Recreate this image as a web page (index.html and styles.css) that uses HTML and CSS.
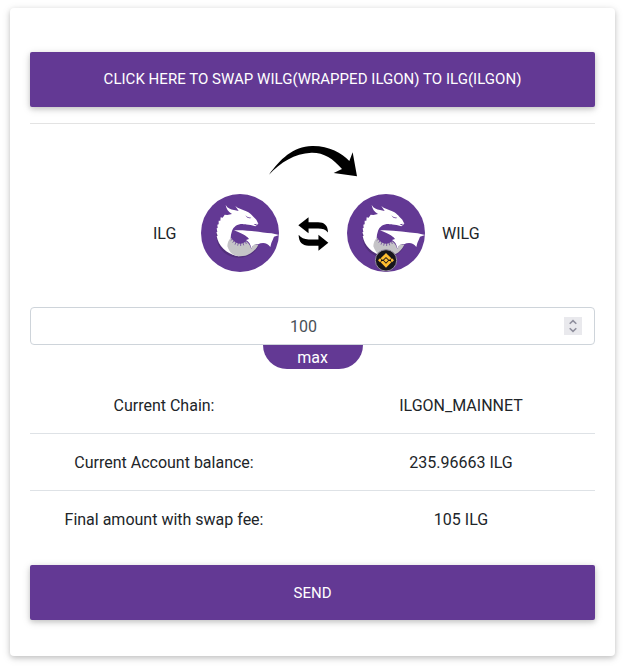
FILE: index.html
```html
<!DOCTYPE html>
<html lang="en">
<head>
<meta charset="utf-8">
<title>Swap</title>
<link rel="stylesheet" href="styles.css">
</head>
<body>
<main class="card">
  <button class="btn btn-switch">CLICK HERE TO SWAP WILG(WRAPPED ILGON) TO ILG(ILGON)</button>
  <hr class="divider">
  <svg class="arrow" viewBox="27 15 264 96" aria-hidden="true">
    <path d="M27 104C59 59 99 19 156 18C207 17 244 39 268 63L278 37L291 109L221 99L246 87C219 55 190 37 154 38C103 40 62 67 27 104Z"/>
  </svg>
  <div class="pair">
    <span class="token token-from">ILG</span>
    <svg class="logo" viewBox="33 27 234 234" aria-hidden="true">
      <defs>
        <g id="dragon">
          <circle cx="150" cy="144" r="117" fill="#633994"/>
          <path fill="#392056" opacity=".4" d="M80 140C74 184 104 218 147 218C173 218 196 204 205 182L200 180C175 214 126 218 96 184Z"/>
          <path fill="#fff" d="M107 60C113 70 122 74 132 75L146 78L136 63C145 72 155 72 165 77C181 82 187 92 199 104L205 116L196 124L182 120C172 119 166 119 158 117C142 117 130 125 126 138C121 152 120 166 127 180L148 214C112 210 85 184 80 153L83 152L79 142L82 141L80 130L83 129L82 119L86 118L86 107L91 107L92 97L98 98L104 89L112 90L126 87C115 81 109 72 107 60Z"/>
          <path fill="#c5c4c7" d="M123 158C116 164 112 174 112 184C115 193 119 199 123 204C132 211 141 214 151 214C177 213 196 199 205 179L190 177L184 192C180 181 176 174 168 169C160 177 148 178 139 173C132 169 127 164 123 158Z"/>
          <path fill="none" stroke="#633994" stroke-width="2.2" d="M127 162L122 167M132 167L128 173M138 171L135 179M145 174L143 182M152 174L152 183M159 173L161 181M166 169L169 177"/>
          <path fill="#fff" d="M132 136C174 134 211 143 245 145L267 150L252 155L248 165L244 174L241 186C232 174 219 171 204 178C194 175 187 182 184 191C182 178 177 170 168 165L177 162C169 151 152 144 132 136Z"/>
          <path fill="#633994" d="M166 91C172 97 178 98 184 98C178 101 171 100 166 91ZM191 118L203 116L196 121Z"/>
        </g>
      </defs>
      <use href="#dragon"/>
    </svg>
    <svg class="swap" viewBox="22 20 94 101" aria-hidden="true">
      <path d="M23 44L54 20V35H83C101 35 113 44 113 66C105 57 96 54 83 54H54V68ZM114 97L84 121V106H54C35 106 24 95 24 73C31 83 41 87 54 87H84V73Z"/>
    </svg>
    <svg class="logo" viewBox="33 27 234 234" aria-hidden="true">
      <use href="#dragon"/>
      <circle cx="150" cy="226" r="32" fill="#17151b" stroke="#938b9e" stroke-width="3"/>
      <path fill="#ffbd30" d="M150 204L166 220L160 226L150 216L140 226L134 220ZM150 248L134 232L140 226L150 236L160 226L166 232ZM150 219.500L156.500 226L150 232.500L143.500 226ZM132 220L138 226L132 232L126 226ZM168 220L174 226L168 232L162 226Z"/>
      <path stroke="#17151b" stroke-width="3.500" d="M135 226H142M158 226H165"/>
    </svg>
    <span class="token token-to">WILG</span>
  </div>
  <div class="amount">
    <span class="value">100</span>
    <svg class="spinner" viewBox="0 0 18 18" aria-hidden="true">
      <path d="M5.7 6.8L9 3.6L12.3 6.8M5.7 11.2L9 14.4L12.3 11.2"/>
    </svg>
  </div>
  <button class="max">max</button>
  <div class="rows">
    <div class="row"><span>Current Chain:</span><span>ILGON_MAINNET</span></div>
    <div class="row"><span>Current Account balance:</span><span>235.96663 ILG</span></div>
    <div class="row"><span>Final amount with swap fee:</span><span>105 ILG</span></div>
  </div>
  <button class="btn">SEND</button>
</main>
</body>
</html>
```
FILE: styles.css
```css
* { box-sizing: border-box; }
body {
  margin: 0;
  padding: 8px 9px 10px 10px;
  background: #fff;
  color: #212529;
  font: 16px/24px Roboto, sans-serif;
}
.card {
  display: flex;
  flex-direction: column;
  height: 648px;
  padding: 44px 20px 36px;
  border-radius: 4px;
  background: #fff;
  box-shadow: 0 2px 5px rgba(0, 0, 0, .16), 0 2px 10px rgba(0, 0, 0, .12);
}
.btn {
  flex: none;
  height: 55px;
  padding: 0;
  border: 0;
  border-radius: 2px;
  background: #633994;
  color: #fff;
  font: 15px/22px Roboto, sans-serif;
  box-shadow: 0 2px 5px rgba(0, 0, 0, .16), 0 2px 10px rgba(0, 0, 0, .12);
}
.btn-switch { padding-bottom: 2px; letter-spacing: .03px; }
.divider {
  width: 100%;
  height: 1px;
  margin: 16px 0 21px;
  border: 0;
  background: #e3e3e3;
}
.arrow {
  flex: none;
  width: 88px;
  height: 32px;
  margin-left: 239px;
}
.pair {
  display: flex;
  align-items: center;
  height: 78px;
  margin: 17px 0 35px;
}
.token { flex: none; padding-top: 2px; }
.token-from { width: 171px; padding-left: 123px; }
.token-to { margin-left: 17px; }
.logo { flex: none; width: 78px; height: 78px; }
.swap { flex: none; width: 31px; height: 34px; margin: 1px 18px 0 19px; }
.amount {
  display: flex;
  align-items: center;
  height: 38px;
  padding: 0 12px;
  border: 1px solid #ced4da;
  border-radius: 4px;
  color: #495057;
}
.value { flex: 1; padding-top: 2px; text-align: center; }
.spinner {
  width: 18px;
  height: 18px;
  background: #e9e9ed;
  fill: none;
  stroke: #8f8f9d;
  stroke-width: 1.6;
}
.max {
  flex: none;
  align-self: center;
  width: 100px;
  height: 24px;
  padding: 1px 0 0;
  border: 0;
  border-radius: 0 0 24px 24px;
  background: #633994;
  color: #fff;
  font: 16px/24px Roboto, sans-serif;
}
.rows { margin: 8px 0 17px; }
.row {
  display: grid;
  grid-template-columns: 268px 268px;
  justify-content: space-between;
  align-items: center;
  height: 57px;
  padding-top: 2px;
  border-bottom: 1px solid #dee2e6;
  text-align: center;
}
.row:last-child { border-bottom-color: transparent; }
```
